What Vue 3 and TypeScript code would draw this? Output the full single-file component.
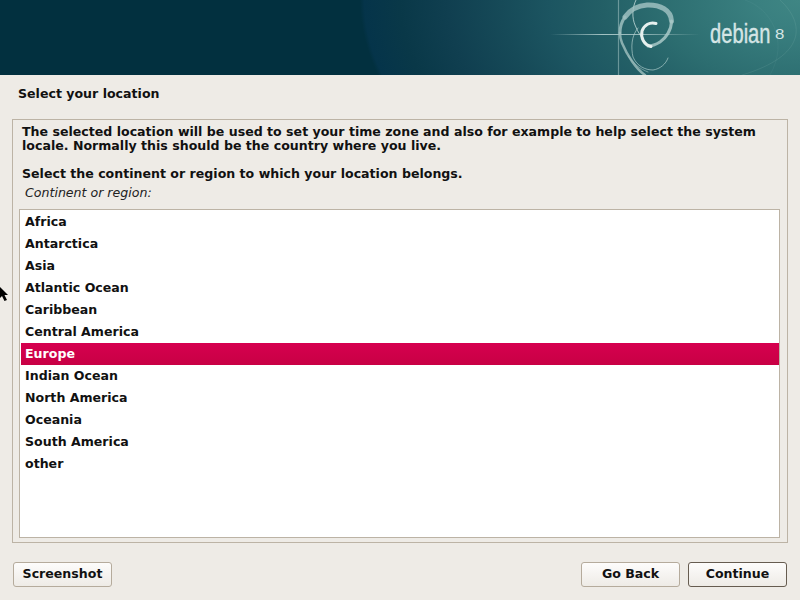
<template>
  <div class="installer">
    <header class="banner">
      <svg class="swirl" width="800" height="75" viewBox="0 0 800 75">
        <defs>
          <linearGradient id="beam" x1="0" x2="1" y1="0" y2="0">
            <stop offset="0" stop-color="#c4dcdb" stop-opacity="0" />
            <stop offset="0.35" stop-color="#c4dcdb" stop-opacity=".8" />
            <stop offset="0.6" stop-color="#c4dcdb" stop-opacity=".7" />
            <stop offset="1" stop-color="#c4dcdb" stop-opacity="0" />
          </linearGradient>
        </defs>
        <g fill="none" stroke-linecap="round">
          <path d="M780 0C806 24 806 56 742 75" stroke="#9fc4c2" opacity=".14" />
          <path d="M745 0C770 8 790 40 770 75" stroke="#9fc4c2" opacity=".07" />
          <rect x="550" y="34" width="150" height="1" fill="url(#beam)" stroke="none" />
          <path d="M618.500 0V75" stroke="#a5c4c4" stroke-width="1.200" opacity=".55" stroke-linecap="butt" />
          <path d="M636 0C632 8 632 18 635 25C638 33 642 38 647 44" stroke="#c4dcdb" stroke-width="1" opacity=".8" />
          <path d="M638 28C631 36 631 48 633 57C637 66 645 70 653 70C660 69 666 64 668 58" stroke="#b6d2d1" stroke-width="1" opacity=".65" />
          <path d="M645 75C636 69 627 55 622 43C620 38 620 34 620 33" stroke="#a1c2c1" stroke-width="2.500" opacity=".8" />
          <path d="M628 56C634 64 640 69 648 72" stroke="#a1c2c1" stroke-width="1" opacity=".6" />
          <path d="M620 33C620 26 622 21 625 17" stroke="#9dbfbf" stroke-width="3" opacity=".85" />
          <path d="M625 17C630 10 638 5.500 647 5C660 4.500 671 10 671.500 21" stroke="#9dbfbf" stroke-width="5" opacity=".85" />
          <path d="M671.500 21C671.500 30 666 38 660 42C656 44.500 652 46 648 46" stroke="#a9c9c8" stroke-width="3" opacity=".85" />
          <path d="M656 23.500C650 21.500 644 25 642 31C640.500 38 644 45 651 46.500" stroke="#e6f0ee" stroke-width="3" />
        </g>
      </svg>
      <div class="brand">
        <span class="brand-name">debian</span>
        <span class="brand-version">8</span>
      </div>
    </header>

    <h1 class="title">Select your location</h1>

    <section class="panel">
      <p class="help">
        The selected location will be used to set your time zone and also for example to help select the system<br />
        locale. Normally this should be the country where you live.
      </p>
      <p class="question">Select the continent or region to which your location belongs.</p>
      <p class="label">Continent or region:</p>
      <ul class="list">
        <li v-for="region in regions" :key="region" :class="{ selected: region === selected }">{{ region }}</li>
      </ul>
    </section>

    <footer class="actions">
      <button class="btn">Screenshot</button>
      <div class="right">
        <button class="btn">Go Back</button>
        <button class="btn primary">Continue</button>
      </div>
    </footer>

    <svg class="cursor" width="10" height="18" viewBox="0 0 10 18">
      <path d="M-2 0L8 10H4.500L7 15L4.500 16L2 11L-1 14Z" fill="#000" />
    </svg>
  </div>
</template>

<script setup lang="ts">
const regions: string[] = [
  'Africa',
  'Antarctica',
  'Asia',
  'Atlantic Ocean',
  'Caribbean',
  'Central America',
  'Europe',
  'Indian Ocean',
  'North America',
  'Oceania',
  'South America',
  'other'
];
const selected = 'Europe';
</script>

<style>
html,
body {
  margin: 0;
  background: #eeebe6;
}
</style>

<style scoped>
.installer {
  position: relative;
  width: 800px;
  height: 600px;
  overflow: hidden;
  display: flex;
  flex-direction: column;
  background: #eeebe6;
  color: #111;
  font-family: "DejaVu Sans", sans-serif;
  font-size: 12.58px;
  font-weight: bold;
  line-height: 15px;
}

.banner {
  position: relative;
  flex: none;
  height: 75px;
  background: radial-gradient(ellipse 440px 265px at 800px 0, #3f8684 0%, #3a8080 10%, #2c6d70 32%, #235f66 45%, #1c5561 57%, #164a58 68%, #103f50 80%, #093848 91%, #05344a 99%, #02303f 100%);
}

.swirl {
  position: absolute;
  left: 0;
  top: 0;
}

.brand {
  position: absolute;
  left: 710px;
  top: 20px;
  display: flex;
  color: #d5e5e5;
  font-family: "Liberation Sans", sans-serif;
  font-weight: normal;
}

.brand-name {
  font-size: 28px;
  line-height: 28px;
  -webkit-text-stroke: 0.4px #d5e5e5;
  transform: scaleX(0.72);
  transform-origin: left top;
  width: 63px;
}

.brand-version {
  font-size: 14px;
  line-height: 16px;
  margin-top: 6px;
  margin-left: 2px;
  transform: scaleX(1.2);
  transform-origin: left top;
}

.title {
  margin: 11px 0 0 18px;
  height: 33px;
  font-size: 12.58px;
  line-height: 15px;
}

.panel {
  flex: none;
  box-sizing: border-box;
  margin: 0 12px;
  height: 424px;
  padding: 5px 6px 4px;
  border: 1px solid #bcb3a5;
  display: flex;
  flex-direction: column;
}

.help,
.question,
.label {
  margin: 0;
  padding: 0 3px;
}

.help {
  line-height: 14px;
  white-space: nowrap;
}

.question {
  margin-top: 13px;
}

.label {
  margin-top: 4px;
  padding-left: 6px;
  font-weight: normal;
  font-style: italic;
  color: #222;
}

.list {
  flex: 1;
  margin: 9px 1px 0 0;
  padding: 1px 0 1px 1px;
  list-style: none;
  border: 1px solid #bcb3a5;
  background: #fff;
}

.list li {
  height: 22px;
  line-height: 22px;
  padding-left: 4px;
}

.list li.selected {
  background: linear-gradient(#d6004f, #c80044);
  color: #fff;
}

.actions {
  display: flex;
  justify-content: space-between;
  margin: 19px 13px 0;
}

.right {
  display: flex;
  gap: 8px;
}

.btn {
  box-sizing: border-box;
  width: 99px;
  height: 25px;
  padding: 0 0 3px;
  border: 1px solid #b5ab9c;
  border-radius: 3px;
  background: linear-gradient(#fdfcfb, #eeebe6);
  color: #111;
  font: inherit;
}

.btn.primary {
  border-color: #665c50;
}

.cursor {
  position: absolute;
  left: 0;
  top: 285px;
}
</style>
